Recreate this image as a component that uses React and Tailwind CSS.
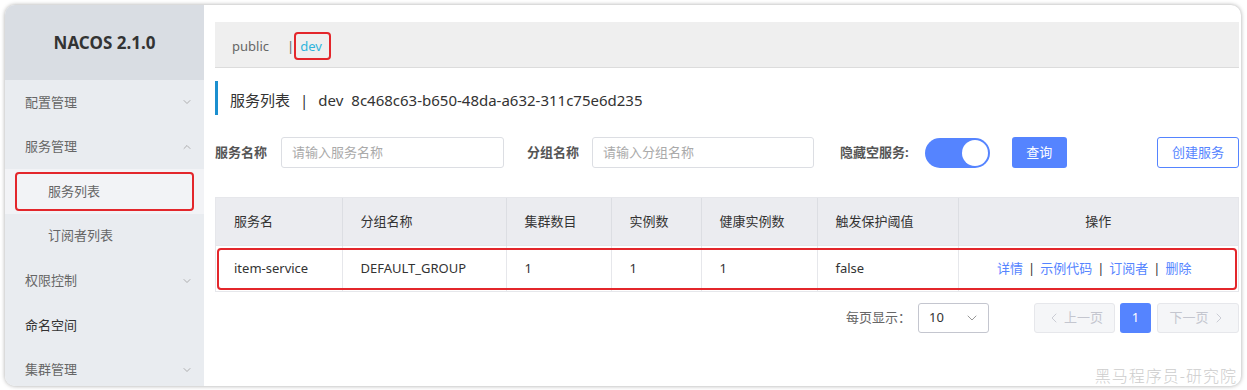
import React from 'react'
import { ChevronDown, ChevronUp, ChevronLeft, ChevronRight } from 'lucide-react'

const menu = [
  { name: '配置管理', arrow: 'down' },
  { name: '服务管理', arrow: 'up' },
  { name: '服务列表', sub: true, active: true },
  { name: '订阅者列表', sub: true },
  { name: '权限控制', arrow: 'down' },
  { name: '命名空间', dark: true },
  { name: '集群管理', arrow: 'down' },
]

const columns = [
  { title: '服务名', w: 126 },
  { title: '分组名称', w: 164 },
  { title: '集群数目', w: 105 },
  { title: '实例数', w: 90 },
  { title: '健康实例数', w: 116 },
  { title: '触发保护阈值', w: 141 },
  { title: '操作', w: 280, center: true },
]

const row = ['item-service', 'DEFAULT_GROUP', '1', '1', '1', 'false']

const Sidebar = () => {
  return (
    <div className="w-[199px] shrink-0 bg-[#e9ecf0] flex flex-col">
      {/* logo */}
      <div className="h-[75px] shrink-0 bg-[#d9dde3] flex items-center justify-center">
        <span className="text-[17px] font-bold text-[#333]">NACOS 2.1.0</span>
      </div>

      {menu.map((item) => (
        <div
          key={item.name}
          className={`relative shrink-0 h-[44.6px] flex items-center justify-between pr-[11px] text-[13px] ${
            item.sub ? 'pl-[43px]' : 'pl-[20px]'
          } ${item.active ? 'bg-[#f2f3f6]' : ''} ${item.dark ? 'text-[#333]' : 'text-[#666]'}`}
        >
          <span>{item.name}</span>
          {item.arrow === 'down' && <ChevronDown size={12} strokeWidth={1.5} className="text-[#999]" />}
          {item.arrow === 'up' && <ChevronUp size={12} strokeWidth={1.5} className="text-[#999]" />}
          {item.active && (
            <div className="absolute left-[10px] right-[10px] top-[3px] bottom-[3px] border-2 border-[#e3262b] rounded-[4px]" />
          )}
        </div>
      ))}
    </div>
  )
}

const App = () => {
  return (
    <div
      className="w-[1247px] h-[390px] bg-white pl-[5px] pt-[5px] pr-[6px] pb-[4px] text-[#333]"
      style={{ fontFamily: '"Noto Sans", "Noto Sans CJK SC", sans-serif' }}
    >
      <div className="relative h-full flex rounded-[10px] overflow-hidden shadow-[0_0_4px_rgba(0,0,0,0.35)] bg-white">
        <Sidebar />

        {/* main */}
        <div className="flex-1 pl-[11px] pr-[5px] pt-[17px] flex flex-col">
          {/* namespace bar */}
          <div className="h-[46px] bg-[#efefef] border-b border-[#dcdcdc] flex items-center pl-[17px] pt-[4px] text-[13px]">
            <span className="text-[#666]">public</span>
            <span className="ml-[18px] text-[#666]">|</span>
            <span className="relative ml-[6px] text-[#2fb4dc]">
              dev
              <span className="absolute -left-[6px] -right-[9px] -top-[5px] -bottom-[4px] border-2 border-[#e3262b] rounded-[4px]" />
            </span>
          </div>

          {/* title */}
          <div className="mt-[13px] h-[34px] border-l-[3px] border-[#1b8fcf] pl-[12px] pt-[5px] flex items-center text-[15px] text-[#333]">
            <span>服务列表</span>
            <span className="ml-[10px]">|</span>
            <span className="ml-[10px]">dev</span>
            <span className="ml-[8px]">8c468c63-b650-48da-a632-311c75e6d235</span>
          </div>

          {/* search form */}
          <div className="mt-[22px] h-[31px] flex items-center text-[13px]">
            <span className="font-bold text-[#555]">服务名称</span>
            <div className="ml-[14px] w-[223px] h-[31px] border border-[#dcdee3] rounded-[3px] flex items-center pl-[10px] text-[#aaa]">
              请输入服务名称
            </div>
            <span className="ml-[23px] font-bold text-[#555]">分组名称</span>
            <div className="ml-[13px] w-[222px] h-[31px] border border-[#dcdee3] rounded-[3px] flex items-center pl-[10px] text-[#aaa]">
              请输入分组名称
            </div>
            <span className="ml-[26px] font-bold text-[#555]">隐藏空服务:</span>
            <div className="ml-[16px] w-[65px] h-[30px] rounded-full bg-[#5584ff] flex items-center justify-end pr-[2px]">
              <div className="w-[26px] h-[26px] rounded-full bg-white" />
            </div>
            <button className="ml-[22px] w-[55px] h-[31px] rounded-[3px] bg-[#5584ff] text-white">查询</button>
            <button className="ml-auto w-[82px] h-[31px] rounded-[3px] border border-[#5584ff] bg-white text-[#5584ff]">
              创建服务
            </button>
          </div>

          {/* table */}
          <div className="relative mt-[29px] border border-[#e6e7eb]">
            <table className="w-full table-fixed border-collapse text-[13px]">
              <colgroup>
                {columns.map((c) => (
                  <col key={c.title} style={{ width: c.w }} />
                ))}
              </colgroup>
              <thead>
                <tr className="h-[47px] bg-[#ebecf0]">
                  {columns.map((c) => (
                    <th
                      key={c.title}
                      className={`border-r border-[#dcdee3] last:border-r-0 px-[18px] font-normal text-[#333] ${
                        c.center ? 'text-center' : 'text-left'
                      }`}
                    >
                      {c.title}
                    </th>
                  ))}
                </tr>
              </thead>
              <tbody>
                <tr className="h-[46px] border-t border-[#e6e7eb]">
                  {row.map((v, i) => (
                    <td key={i} className="border-r border-[#e6e7eb] px-[18px] text-[#333]">
                      {v}
                    </td>
                  ))}
                  <td className="text-center text-[#5584ff] pr-[8px]">
                    详情<span className="mx-[5px] text-[#333]">|</span>示例代码
                    <span className="mx-[5px] text-[#333]">|</span>订阅者
                    <span className="mx-[5px] text-[#333]">|</span>删除
                  </td>
                </tr>
              </tbody>
            </table>
            {/* highlight */}
            <div className="absolute left-[1px] right-[1px] top-[50px] bottom-[1px] border-2 border-[#e3262b] rounded-[4px]" />
          </div>

          {/* pagination */}
          <div className="mt-[11px] h-[30px] flex items-center justify-end text-[13px]">
            <span className="text-[#666]">每页显示：</span>
            <div className="ml-[7px] w-[71px] h-[30px] border border-[#c4c6cf] rounded-[3px] flex items-center justify-between pl-[10px] pr-[8px]">
              <span className="text-[#333]">10</span>
              <ChevronDown size={16} strokeWidth={1.3} className="text-[#888]" />
            </div>
            <div className="ml-[45px] w-[81px] h-[30px] border border-[#e6e7eb] bg-[#f5f6f8] rounded-[3px] flex items-center justify-center gap-[2px] text-[#c4c6cf]">
              <ChevronLeft size={16} strokeWidth={1.3} />
              <span>上一页</span>
            </div>
            <div className="ml-[5px] w-[31px] h-[30px] bg-[#5584ff] rounded-[3px] flex items-center justify-center text-white">
              1
            </div>
            <div className="ml-[6px] w-[82px] h-[30px] border border-[#e6e7eb] bg-[#f5f6f8] rounded-[3px] flex items-center justify-center gap-[2px] text-[#c4c6cf]">
              <span>下一页</span>
              <ChevronRight size={16} strokeWidth={1.3} />
            </div>
          </div>
        </div>

        {/* watermark */}
        <div className="absolute right-[4px] bottom-[-2px] text-[16px] font-light tracking-[1px] text-[#cdcdcd]">
          黑马程序员-研究院
        </div>
      </div>
    </div>
  )
}

export default App
